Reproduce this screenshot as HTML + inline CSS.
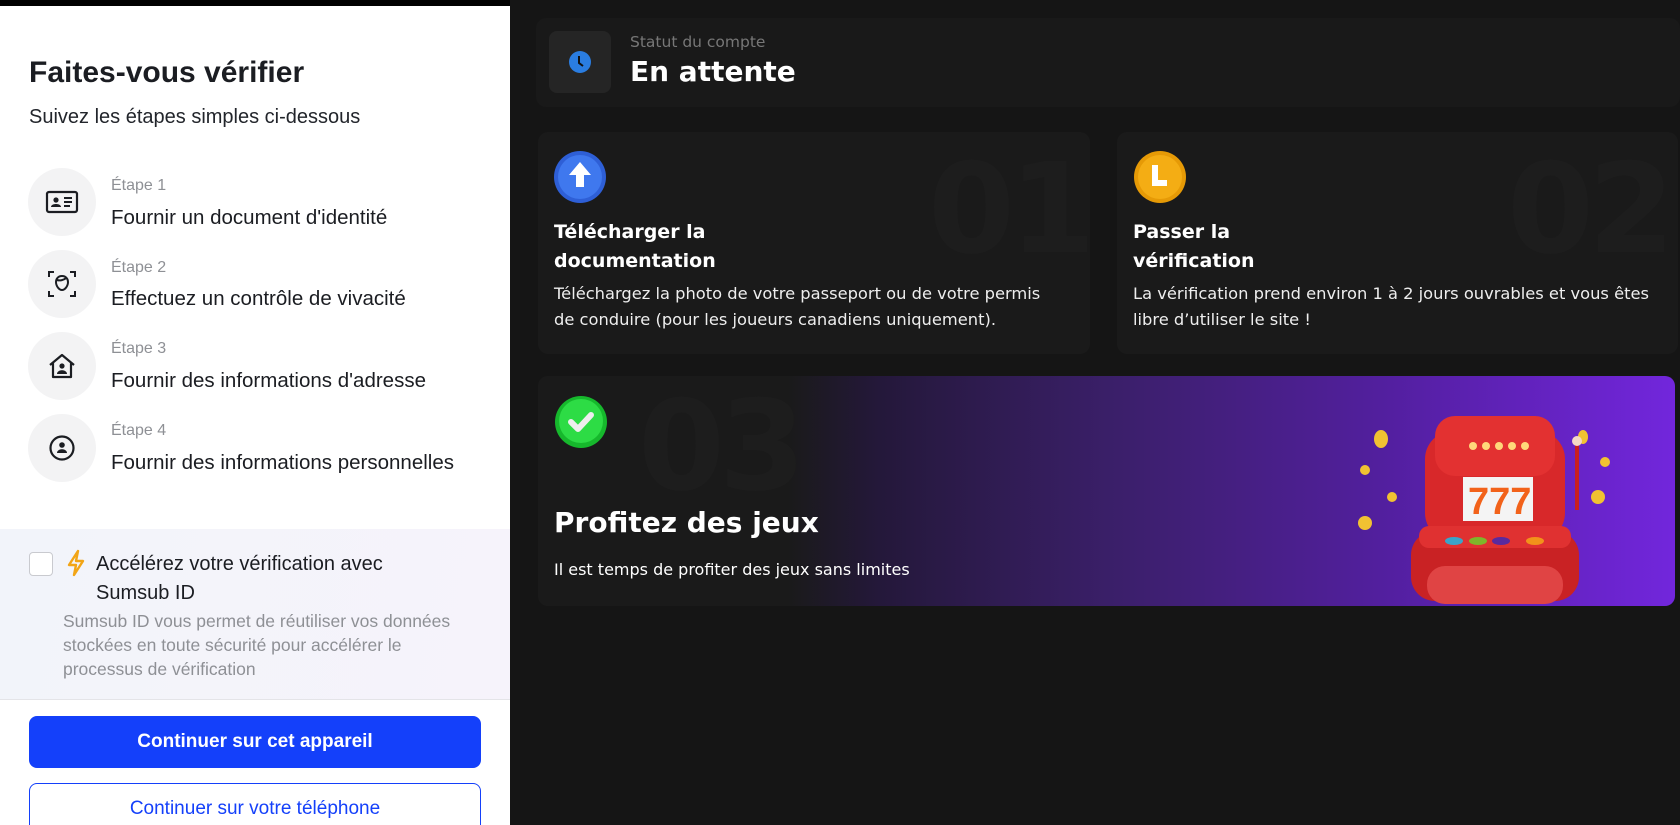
<!DOCTYPE html>
<html><head><meta charset="utf-8"><style>
*{margin:0;padding:0;box-sizing:border-box}
html,body{width:1680px;height:825px;overflow:hidden}
body{background:#151515;font-family:"Liberation Sans",sans-serif;position:relative}
.topbar{position:absolute;left:0;top:0;width:510px;height:6px;background:#000}
.left{position:absolute;left:0;top:6px;width:510px;height:819px;background:#fff;overflow:hidden}
.a{position:absolute}
h1{position:absolute;left:29px;top:50px;font-size:30px;font-weight:700;color:#1b1d22}
.sub{left:29px;top:104px;font-size:20px;color:#22252b}
.circ{position:absolute;left:28px;width:68px;height:68px;border-radius:50%;background:#f3f3f4;display:flex;align-items:center;justify-content:center}
.et{position:absolute;left:111px;font-size:16px;color:#8e9095}
.mt{position:absolute;left:111px;font-size:20.5px;color:#1b1d22}
.sums{position:absolute;left:0;top:523px;width:510px;height:171px;background:linear-gradient(100deg,#f2f4fa,#f6f3fb);border-bottom:1px solid #e4e4e8}
.btn1{position:absolute;left:29px;top:710px;width:452px;height:52px;border-radius:8px;background:#1440fa;color:#fff;font-size:19px;font-weight:700;text-align:center;line-height:52px}
.btn2{position:absolute;left:29px;top:777px;width:452px;height:60px;border-radius:8px;border:1.5px solid #1440fa;color:#1440fa;font-size:19px;text-align:center;line-height:50px}
.card{position:absolute;background:#1a1a1a;border-radius:10px;overflow:hidden}
.r{font-family:"DejaVu Sans",sans-serif}
.big{position:absolute;font-family:"DejaVu Sans",sans-serif;font-size:125px;font-weight:900;color:#1d1d1d;letter-spacing:-6px}
.ct{position:absolute;left:16px;top:86px;font-size:19px;font-weight:700;color:#fff;line-height:29px}
.cd{position:absolute;left:16px;top:149px;font-size:16.3px;color:#eee;line-height:26px}
</style></head><body>
<div class="topbar"></div>
<div class="left">
<h1>Faites-vous vérifier</h1>
<div class="a sub" style="top:100px">Suivez les étapes simples ci-dessous</div>

<div class="circ" style="top:162px"><svg width="34" height="24" viewBox="0 0 34 24"><rect x="2" y="2" width="30" height="20" rx="2" fill="none" stroke="#1b1d22" stroke-width="2.2"/><circle cx="11" cy="10" r="2.6" fill="#1b1d22"/><path d="M6 17c0-4 10-4 10 0z" fill="#1b1d22"/><path d="M19 8h8M19 12h8M19 16h6" stroke="#1b1d22" stroke-width="2"/></svg></div>
<div class="et" style="top:171px">Étape 1</div><div class="mt" style="top:200px">Fournir un document d'identité</div>

<div class="circ" style="top:244px"><svg width="30" height="28" viewBox="0 0 30 28"><path d="M2 7V2h5M23 2h5v5M2 21v5h5M23 26h5v-5" fill="none" stroke="#1b1d22" stroke-width="2"/><path d="M15 6c-4 0-6 3-6 6 0 4 3 8 6 8s6-4 6-8c0-3-2-6-6-6z" fill="none" stroke="#1b1d22" stroke-width="2"/><path d="M10 10c3 1 7 0 9-2" stroke="#1b1d22" stroke-width="2" fill="none"/></svg></div>
<div class="et" style="top:253px">Étape 2</div><div class="mt" style="top:281px">Effectuez un contrôle de vivacité</div>

<div class="circ" style="top:326px"><svg width="30" height="28" viewBox="0 0 30 28"><path d="M3 13L15 3l12 10M6 11v14h18V11" fill="none" stroke="#1b1d22" stroke-width="2.2" stroke-linejoin="round"/><circle cx="15" cy="14" r="2.6" fill="#1b1d22"/><path d="M10 22c0-5 10-5 10 0z" fill="#1b1d22"/></svg></div>
<div class="et" style="top:334px">Étape 3</div><div class="mt" style="top:363px">Fournir des informations d'adresse</div>

<div class="circ" style="top:408px"><svg width="28" height="28" viewBox="0 0 28 28"><circle cx="14" cy="14" r="11.5" fill="none" stroke="#1b1d22" stroke-width="2.2"/><circle cx="14" cy="11" r="2.8" fill="#1b1d22"/><path d="M9 19c0-5 10-5 10 0z" fill="#1b1d22"/></svg></div>
<div class="et" style="top:416px">Étape 4</div><div class="mt" style="top:445px">Fournir des informations personnelles</div>

<div class="sums">
<div class="a" style="left:29px;top:23px;width:24px;height:24px;border:1.5px solid #c9cacf;border-radius:4px;background:#fff"></div>
<svg class="a" style="left:65px;top:20px" width="22" height="28" viewBox="0 0 22 28"><path d="M13 2L4 16h7l-2 10 9-14h-7z" fill="none" stroke="#f2a516" stroke-width="2.4" stroke-linejoin="round"/></svg>
<div class="a" style="left:96px;top:21px;font-size:20px;color:#1b1d22;line-height:29px">Accélérez votre vérification avec<br>Sumsub ID</div>
<div class="a" style="left:63px;top:80px;font-size:17.5px;color:#8e9095;line-height:24px">Sumsub ID vous permet de réutiliser vos données<br>stockées en toute sécurité pour accélérer le<br>processus de vérification</div>
</div>
<div class="btn1">Continuer sur cet appareil</div>
<div class="btn2">Continuer sur votre téléphone</div>
</div>

<div class="card r" style="left:536px;top:18px;width:1144px;height:89px;background:#191919">
<div class="a" style="left:13px;top:13px;width:62px;height:62px;border-radius:8px;background:#252525"></div>
<svg class="a" style="left:32px;top:32px" width="24" height="24" viewBox="0 0 24 24"><circle cx="12" cy="12" r="11" fill="#2a7de1"/><path d="M11 6v7l4 3" stroke="#111" stroke-width="2" fill="none"/></svg>
<div class="a" style="left:94px;top:15px;font-size:15.5px;color:#777">Statut du compte</div>
<div class="a" style="left:94px;top:37px;font-size:28px;font-weight:700;color:#fff">En attente</div>
</div>

<div class="card r" style="left:538px;top:132px;width:552px;height:222px">
<div class="big" style="left:390px;top:5px">01</div>
<svg class="a" style="left:15px;top:18px" width="54" height="54" viewBox="0 0 54 54"><circle cx="27" cy="27" r="26" fill="#2e5fd6"/><circle cx="27" cy="27" r="22" fill="#3f78ee"/><path d="M27 12l-11 13h7v12h8V25h7z" fill="#fff"/></svg>
<div class="ct">Télécharger la<br>documentation</div>
<div class="cd">Téléchargez la photo de votre passeport ou de votre permis<br>de conduire (pour les joueurs canadiens uniquement).</div>
</div>

<div class="card r" style="left:1117px;top:132px;width:561px;height:222px">
<div class="big" style="left:390px;top:5px">02</div>
<svg class="a" style="left:16px;top:18px" width="54" height="54" viewBox="0 0 54 54"><circle cx="27" cy="27" r="26" fill="#e69a06"/><circle cx="27" cy="27" r="22" fill="#f4ad14"/><path d="M22 15v18h12" stroke="#fff" stroke-width="6" fill="none"/></svg>
<div class="ct">Passer la<br>vérification</div>
<div class="cd">La vérification prend environ 1 à 2 jours ouvrables et vous êtes<br>libre d’utiliser le site !</div>
</div>

<div class="card r" style="left:538px;top:376px;width:1137px;height:230px;background:linear-gradient(90deg,#1a1a1a 0%,#1a1a1a 22%,#24183a 30%,#3a1f68 50%,#531fa0 75%,#7226dc 100%)">
<div class="big" style="left:100px;top:-2px;color:#1d1d1d">03</div>
<svg class="a" style="left:16px;top:18px" width="56" height="56" viewBox="0 0 56 56"><circle cx="27" cy="28" r="26" fill="#16b82c"/><circle cx="27" cy="27" r="22" fill="#2ddc45"/><path d="M17 28l7 7 13-14" stroke="#eee" stroke-width="6" fill="none" stroke-linecap="round" stroke-linejoin="round"/></svg>
<div class="a" style="left:16px;top:130px;font-size:28px;font-weight:700;color:#fff">Profitez des jeux</div>
<div class="a" style="left:16px;top:184px;font-size:16px;color:#fff">Il est temps de profiter des jeux sans limites</div>
<svg class="a" style="left:785px;top:0" width="300" height="230" viewBox="0 0 300 230">
<g fill="#f1c232"><ellipse cx="58" cy="63" rx="7" ry="9"/><circle cx="42" cy="94" r="5"/><circle cx="69" cy="121" r="5"/><circle cx="42" cy="147" r="7"/><ellipse cx="260" cy="61" rx="5" ry="7"/><circle cx="282" cy="86" r="5"/><circle cx="275" cy="121" r="7"/></g>
<rect x="102" y="55" width="140" height="110" rx="28" fill="#d8282a"/>
<rect x="112" y="40" width="120" height="60" rx="20" fill="#e33131"/>
<g fill="#ffd77a"><circle cx="150" cy="70" r="4"/><circle cx="163" cy="70" r="4"/><circle cx="176" cy="70" r="4"/><circle cx="189" cy="70" r="4"/><circle cx="202" cy="70" r="4"/></g>
<rect x="140" y="101" width="70" height="44" fill="#f4f4f4"/>
<text x="145" y="138" font-family="Liberation Sans" font-weight="700" font-size="38" fill="#f2621a">777</text>
<rect x="252" y="64" width="4" height="70" fill="#c81f1f"/><circle cx="254" cy="65" r="5" fill="#f5d8c5"/>
<rect x="88" y="155" width="168" height="70" rx="24" fill="#c92224"/>
<rect x="96" y="150" width="152" height="22" rx="10" fill="#e03131"/>
<ellipse cx="131" cy="165" rx="9" ry="4" fill="#3aa4c9"/><ellipse cx="155" cy="165" rx="9" ry="4" fill="#7fb62a"/><ellipse cx="178" cy="165" rx="9" ry="4" fill="#5a2a9e"/><ellipse cx="212" cy="165" rx="9" ry="4" fill="#f2921a"/>
<rect x="104" y="190" width="136" height="38" rx="18" fill="#e04444"/>
</svg>
</div>
</body></html>
